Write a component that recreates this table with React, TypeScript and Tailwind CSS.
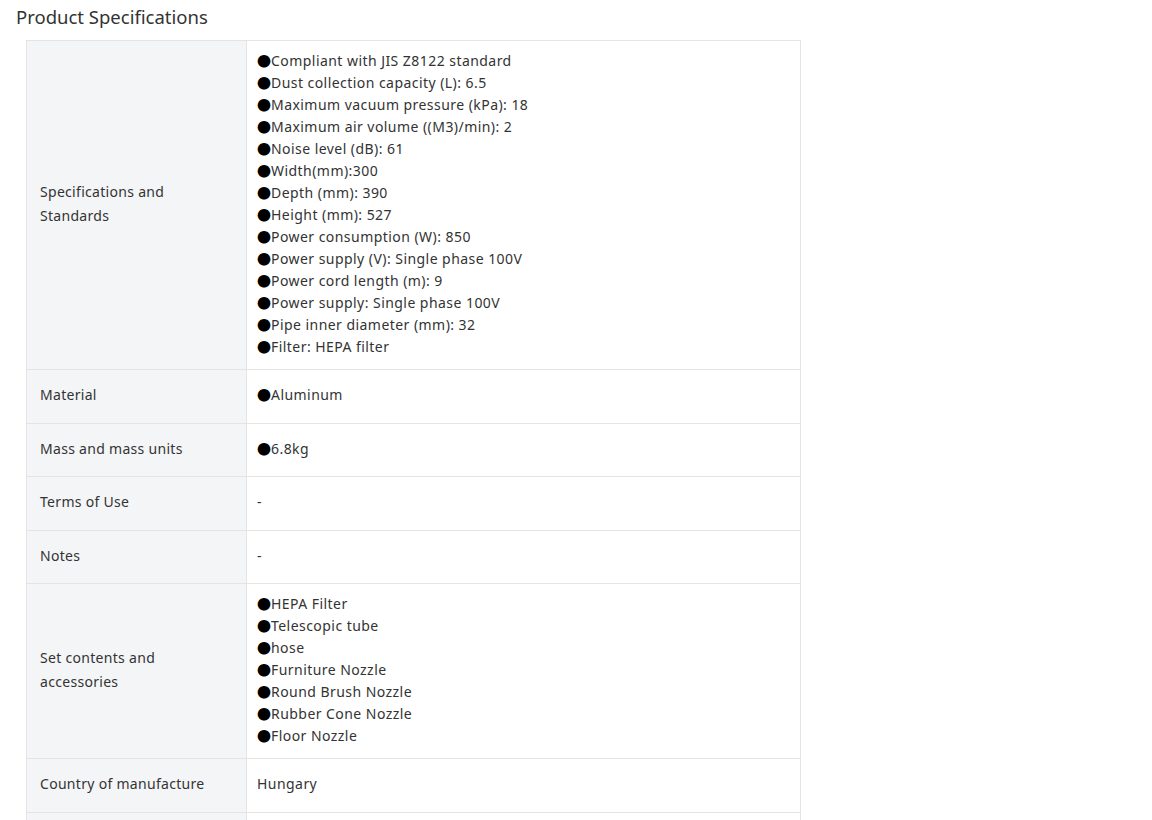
import React from "react";

const font = { fontFamily: '"Noto Sans", "Noto Sans CJK JP", sans-serif' };

type Row = { label: string; items: string[]; bullet?: boolean };

const rows: Row[] = [
  {
    label: "Specifications and Standards",
    bullet: true,
    items: [
      "Compliant with JIS Z8122 standard",
      "Dust collection capacity (L): 6.5",
      "Maximum vacuum pressure (kPa): 18",
      "Maximum air volume ((M3)/min): 2",
      "Noise level (dB): 61",
      "Width(mm):300",
      "Depth (mm): 390",
      "Height (mm): 527",
      "Power consumption (W): 850",
      "Power supply (V): Single phase 100V",
      "Power cord length (m): 9",
      "Power supply: Single phase 100V",
      "Pipe inner diameter (mm): 32",
      "Filter: HEPA filter",
    ],
  },
  { label: "Material", bullet: true, items: ["Aluminum"] },
  { label: "Mass and mass units", bullet: true, items: ["6.8kg"] },
  { label: "Terms of Use", items: ["-"] },
  { label: "Notes", items: ["-"] },
  {
    label: "Set contents and accessories",
    bullet: true,
    items: [
      "HEPA Filter",
      "Telescopic tube",
      "hose",
      "Furniture Nozzle",
      "Round Brush Nozzle",
      "Rubber Cone Nozzle",
      "Floor Nozzle",
    ],
  },
  { label: "Country of manufacture", items: ["Hungary"] },
  { label: "\u00a0", items: ["\u00a0"] },
];

export default function App() {
  return (
    <div className="w-[1152px] h-[820px] overflow-hidden bg-white text-[#333]" style={font}>
      <h2 className="pl-4 pt-[5px] text-[18.5px] leading-[24px] font-normal text-[#333]">
        Product Specifications
      </h2>
      <div className="ml-[26px] mt-[11px] w-[775px]">
        <table className="w-full border-collapse border border-[#e4e4e4]">
          <tbody>
            {rows.map((r, i) => (
              <tr key={i} className="border-b border-[#e4e4e4]">
                <td className="w-[220px] bg-[#f4f5f7] border-r border-[#e4e4e4] px-[13px] pt-[13px] pb-[15px] align-middle text-[14px] leading-[24.5px] tracking-[0.3px] text-[#333]">
                  <div className="w-[172px]">{r.label}</div>
                </td>
                <td className="px-[10px] pt-[9px] pb-[11px] align-middle text-[14px] leading-[22px] tracking-[0.45px] text-[#333]">
                  {r.items.map((it, j) => (
                    <div key={j}>
                      {r.bullet && <span className="text-black tracking-normal">●</span>}
                      {it}
                    </div>
                  ))}
                </td>
              </tr>
            ))}
          </tbody>
        </table>
      </div>
    </div>
  );
}
